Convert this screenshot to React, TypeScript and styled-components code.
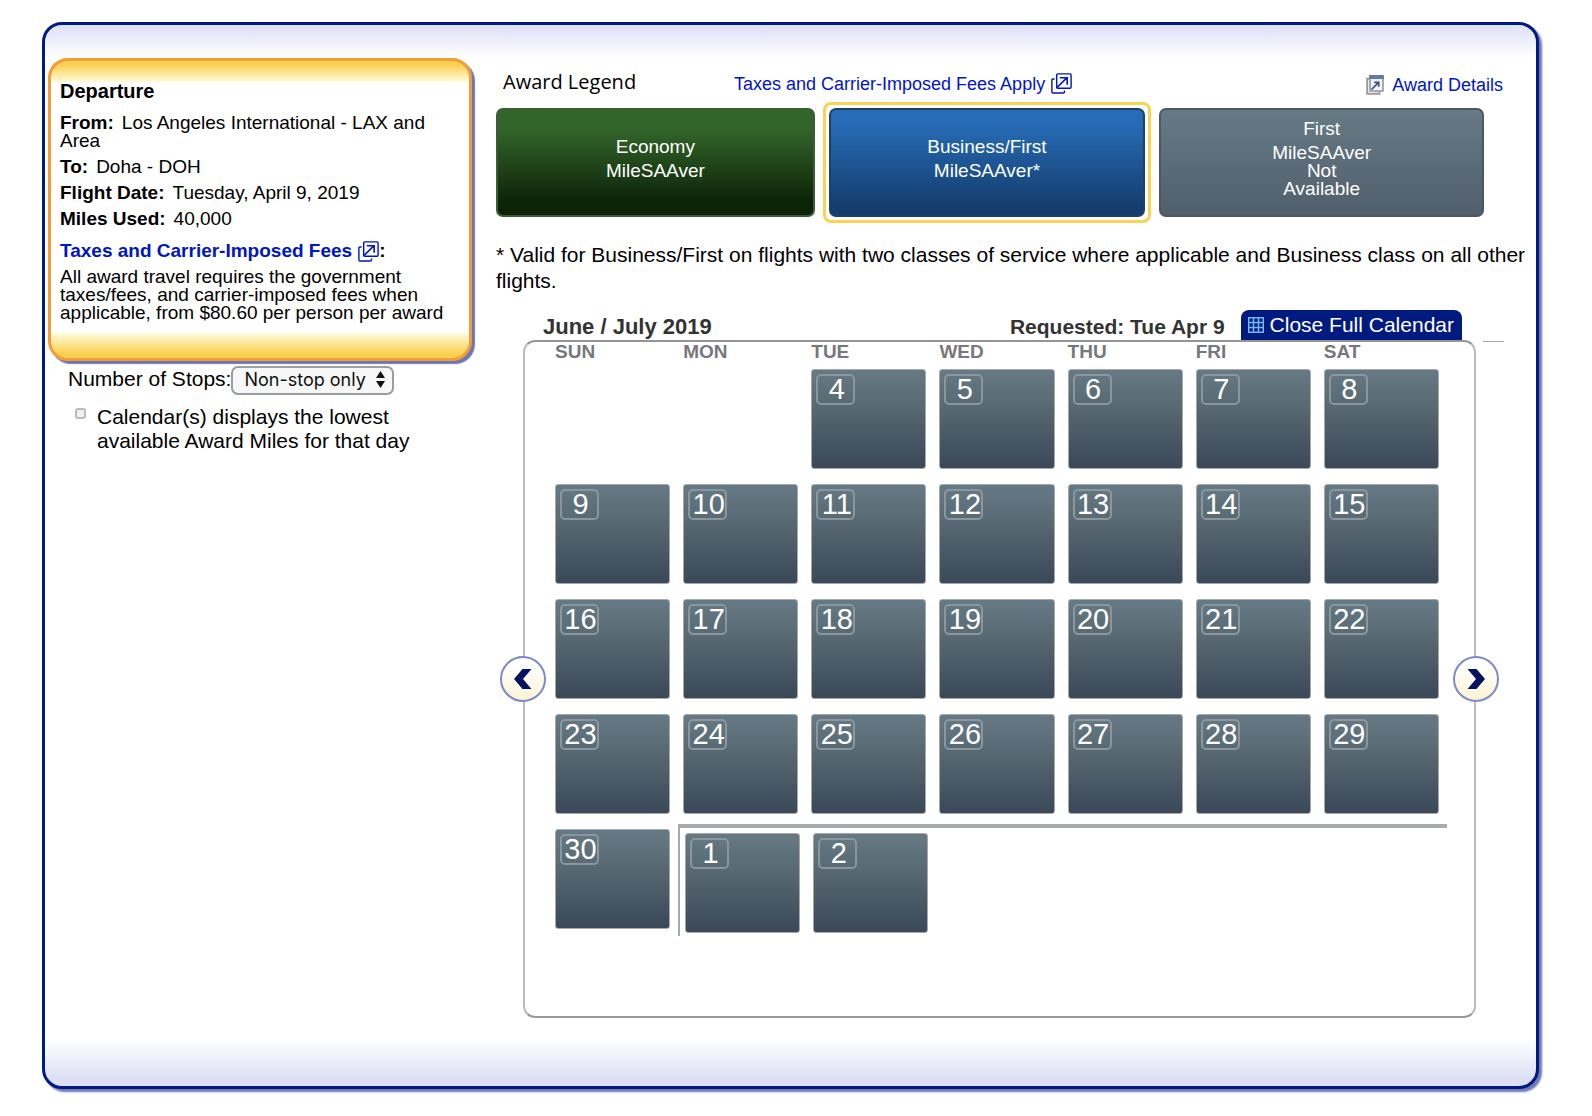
import React from "react";
import styled, { createGlobalStyle, css } from "styled-components";

const GlobalStyle = createGlobalStyle`
  *, *::before, *::after { box-sizing: border-box; }
  body {
    margin: 0;
    background: #fff;
    color: #000;
    font-family: "Liberation Sans", Arial, Helvetica, sans-serif;
    font-size: 19px;
    line-height: 18px;
  }
  h2, p, dl, dd { margin: 0; }
`;

const navy = "#001a80";
const link = "#0015c4";

const Panel = styled.main`
  display: flex;
  gap: 24px;
  margin: 22px 53px 23px 42px;
  padding: 33px 8px 68px 3px;
  border: 3px solid ${navy};
  border-radius: 20px;
  box-shadow: 3px 3px 2px #6f78b8;
  background:
    linear-gradient(#dde0f4, #fff) top / 100% 33px no-repeat,
    linear-gradient(#fff, #dde0f4 85%) bottom / 100% 48px no-repeat,
    #fff;
`;

const Sidebar = styled.aside`
  flex: 0 0 424px;
`;

const TripCard = styled.section`
  padding: 18px 16px 36px 9px;
  border: 3px solid #f29d38;
  border-radius: 20px;
  box-shadow: 3px 3px 1px #6d77b8;
  background:
    linear-gradient(#f9cf4d 15%, #fffbdc) top / 100% 21px no-repeat,
    linear-gradient(#fffbdc, #f9cf4d 85%) bottom / 100% 25px no-repeat,
    #fff;
`;

const CardTitle = styled.h2`
  margin-bottom: 11px;
  font-size: 20px;
  line-height: 24px;
`;

const Facts = styled.dl`
  display: grid;
  gap: 8px;
`;

const Fact = styled.div`
  dt, dd { display: inline; }
  dt { margin-right: 8px; font-weight: bold; }
`;

const FeesTitle = styled.p`
  display: flex;
  align-items: center;
  margin: 14px 0 8px;
  font-weight: bold;
`;

const Link = styled.a`
  display: inline-flex;
  align-items: center;
  gap: 6px;
  color: ${link};
  text-decoration: none;
  svg { margin: -4px 0; }
`;

const Stops = styled.div`
  display: flex;
  align-items: center;
  margin: 5px 0 0 20px;
  font-size: 21px;
  line-height: 24px;
`;

const StopsLabel = styled.label`
  padding-bottom: 4px;
`;

const SelectWrap = styled.div`
  position: relative;
  svg {
    position: absolute;
    top: 5px;
    right: 8px;
    pointer-events: none;
  }
`;

const Select = styled.select`
  appearance: none;
  display: block;
  width: 163px;
  height: 29px;
  padding: 0 0 3px 11px;
  border: 2px solid #9a9da1;
  border-radius: 7px;
  background: #f7f7f7;
  color: #111;
  font: 18px Inter, Roboto, sans-serif;
`;

const LowestOption = styled.label`
  display: flex;
  gap: 11px;
  margin: 10px 40px 0 27px;
  font-size: 21px;
  line-height: 24px;
`;

const Checkbox = styled.input`
  appearance: none;
  flex: none;
  width: 11px;
  height: 11px;
  margin: 3px 0 0;
  border: 2px solid #b9bbc0;
  border-radius: 3px;
  background: #f0f0f3;
  &:checked { background: ${navy}; }
`;

const Main = styled.section`
  flex: 1;
  min-width: 0;
`;

const LegendHead = styled.header`
  display: flex;
  align-items: center;
  height: 44px;
  padding: 7px 25px 0 7px;
  font-size: 18px;
`;

const LegendTitle = styled.h2`
  flex: 0 0 231px;
  padding-bottom: 4px;
  font: 20px "Open Sans", "Noto Sans", sans-serif;
`;

const DetailsLink = styled(Link)`
  margin: 3px 0 0 auto;
  gap: 8px;
`;

const Legend = styled.div`
  display: grid;
  grid-template-columns: 319fr 329fr 325fr;
  align-items: center;
  gap: 8px;
  margin-right: 44px;
`;

const Ring = styled.div`
  padding: 3px;
  border: 3px solid #fad353;
  border-radius: 8px;
`;

const fills = {
  economy: css`border-color: #3c5c36; background: linear-gradient(#32652a 18%, #0d2308 88%);`,
  business: css`border-color: #1d4169; background: linear-gradient(#276cb6 12%, #143d6e 92%);`,
  first: css`border-color: #4b5862; background: linear-gradient(#667a85, #505f6b);`,
};

const Award = styled.button<{ $kind: keyof typeof fills }>`
  display: block;
  width: 100%;
  height: 109px;
  padding: 0 0 8px;
  border: 2px solid;
  border-radius: 7px;
  color: #fff;
  font: 19px/18px "Liberation Sans", Arial, sans-serif;
  ${(p) => fills[p.$kind]}
`;

const Line = styled.span`
  display: block;
  &:first-child { margin-bottom: 6px; }
`;

const Footnote = styled.p`
  margin: 19px 0 16px;
  font-size: 21px;
  line-height: 26px;
`;

const CalendarHead = styled.header`
  display: flex;
  align-items: center;
  height: 30px;
  margin: 0 66px 0 47px;
  color: #333;
  font-size: 21px;
  font-weight: bold;
`;

const Month = styled.h2`
  margin-right: auto;
  padding-top: 4px;
  font-size: 22px;
`;

const Requested = styled.span`
  padding-top: 4px;
`;

const CloseTab = styled.button`
  display: flex;
  align-items: center;
  gap: 6px;
  height: 30px;
  margin-left: 16px;
  padding: 0 8px 0 7px;
  border: 0;
  border-radius: 8px 8px 0 0;
  background: ${navy};
  color: #fff;
  font: 21px "Liberation Sans", Arial, sans-serif;
`;

const Frame = styled.div`
  position: relative;
  margin: 0 52px 0 27px;
  padding: 0 27px 80px 25px;
  border: 2px solid #b9bbbf;
  border-top-color: #949596;
  border-bottom-color: #999;
  border-radius: 12px;
  &::after {
    content: "";
    position: absolute;
    top: -1px;
    right: -30px;
    width: 21px;
    border-top: 1px solid #a5a7ab;
  }
`;

const Pager = styled.button<{ $side: "left" | "right" }>`
  position: absolute;
  top: 50%;
  ${(p) => p.$side}: -25px;
  display: grid;
  place-items: center;
  width: 46px;
  height: 46px;
  margin-top: -23px;
  padding: 0;
  border: 2px solid #8089c6;
  border-radius: 50%;
  background: linear-gradient(#fff 20%, #fbf3d3);
`;

const MonthTable = styled.table`
  width: 100%;
  table-layout: fixed;
  border-spacing: 0;
`;

const DayName = styled.th`
  height: 22px;
  padding: 0 0 2px 5px;
  color: #77787b;
  font-size: 19px;
  line-height: 20px;
  text-align: left;
`;

const DayCell = styled.td<{ $next?: boolean; $first?: boolean; $last?: boolean }>`
  padding: ${(p) => (p.$last ? "5px 8px 7px 5px" : "5px 8px 10px 5px")};
  vertical-align: top;
  ${(p) =>
    p.$next &&
    css`
      padding: 5px 6px 3px 7px;
      border-top: 4px solid #a7aaad;
    `}
  ${(p) =>
    p.$first &&
    css`
      padding-left: 5px;
      border-left: 2px solid #a7aaad;
    `}
`;

const Tile = styled.div`
  height: 100px;
  padding: 4px;
  border: 1px solid #a4a9ad;
  border-radius: 3px;
  background: linear-gradient(#667a85, #54656f 45%, #3a4858);
`;

const DayNumber = styled.span`
  display: block;
  width: 39px;
  height: 31px;
  padding-left: 2px;
  border: 2px solid #8b979f;
  border-radius: 5px;
  color: #fff;
  font-size: 29px;
  line-height: 27px;
  text-align: center;
`;

const PopupIcon = () => (
  <svg width="21" height="21" viewBox="0 0 21 21" fill="none" stroke={link} strokeWidth="1.4" aria-hidden="true">
    <rect x="5.7" y="0.9" width="14.4" height="14.4" rx="1" />
    <path d="M3.6 6H1.9Q.9 6 .9 7V19Q.9 20 1.9 20H12.5Q13.5 20 13.5 19V17.5" />
    <path d="M5.5 15L15.8 4.9M8.8 4.8H16.2V11.8" strokeWidth="1.6" />
  </svg>
);

const DetailsIcon = () => (
  <svg width="18" height="20" viewBox="0 0 18 20" fill="none" aria-hidden="true">
    <path d="M3 3.7H1.2V18.8H13.4V17" stroke="#9a9a9a" strokeWidth="2" />
    <rect x="4" y="1" width="13" height="15" fill="#f1f3f8" stroke="#9197a8" strokeWidth="1.6" />
    <path d="M3.2 0H17.8V4H3.2Z" fill="#6678ab" />
    <path d="M5.5 14.5L12 8M8.2 7.3H12.7V11.8" stroke="#3a4d82" strokeWidth="1.7" />
  </svg>
);

const SelectArrows = () => (
  <svg width="11" height="17" viewBox="0 0 11 17" fill="#111" aria-hidden="true">
    <path d="M5.5 0L10 7H1ZM5.5 17L10 10H1Z" />
  </svg>
);

const GridIcon = () => (
  <svg width="16" height="16" viewBox="0 0 16 16" stroke="#74b9ee" strokeWidth="1.5" fill="none" aria-hidden="true">
    <path d="M.7 .7H15.3V15.3H.7ZM5.5 0V16M10.5 0V16M0 5.5H16M0 10.5H16" />
  </svg>
);

const Chevron = ({ flip }: { flip?: boolean }) => (
  <svg width="18" height="20" viewBox="0 0 18 20" fill="#04145f" aria-hidden="true">
    <path d={flip ? "M17.5 0H8.5L0 10L8.5 20H17.5L9 10Z" : "M.5 0H9.5L18 10L9.5 20H.5L9 10Z"} />
  </svg>
);

const dayNames = ["SUN", "MON", "TUE", "WED", "THU", "FRI", "SAT"];

const weeks: (number | null)[][] = [
  [null, null, 4, 5, 6, 7, 8],
  [9, 10, 11, 12, 13, 14, 15],
  [16, 17, 18, 19, 20, 21, 22],
  [23, 24, 25, 26, 27, 28, 29],
  [30, 1, 2, null, null, null, null],
];

const facts = [
  ["From:", "Los Angeles International - LAX and Area"],
  ["To:", "Doha - DOH"],
  ["Flight Date:", "Tuesday, April 9, 2019"],
  ["Miles Used:", "40,000"],
];

export default function App() {
  return (
    <>
      <GlobalStyle />
      <Panel>
        <Sidebar>
          <TripCard>
            <CardTitle>Departure</CardTitle>
            <Facts>
              {facts.map(([name, value]) => (
                <Fact key={name}>
                  <dt>{name}</dt>
                  <dd>{value}</dd>
                </Fact>
              ))}
            </Facts>
            <FeesTitle>
              <Link href="#fees">
                Taxes and Carrier-Imposed Fees <PopupIcon />
              </Link>
              :
            </FeesTitle>
            <p>
              All award travel requires the government taxes/fees, and carrier-imposed fees when
              applicable, from $80.60 per person per award
            </p>
          </TripCard>
          <Stops>
            <StopsLabel htmlFor="stops">Number of Stops:</StopsLabel>
            <SelectWrap>
              <Select id="stops" defaultValue="nonstop">
                <option value="nonstop">Non-stop only</option>
              </Select>
              <SelectArrows />
            </SelectWrap>
          </Stops>
          <LowestOption>
            <Checkbox type="checkbox" />
            <span>Calendar(s) displays the lowest available Award Miles for that day</span>
          </LowestOption>
        </Sidebar>

        <Main>
          <LegendHead>
            <LegendTitle>Award Legend</LegendTitle>
            <Link href="#fees">
              Taxes and Carrier-Imposed Fees Apply <PopupIcon />
            </Link>
            <DetailsLink href="#details">
              <DetailsIcon /> Award Details
            </DetailsLink>
          </LegendHead>
          <Legend>
            <Award $kind="economy" type="button">
              <Line>Economy</Line>
              <Line>MileSAAver</Line>
            </Award>
            <Ring>
              <Award $kind="business" type="button" aria-pressed="true">
                <Line>Business/First</Line>
                <Line>MileSAAver*</Line>
              </Award>
            </Ring>
            <Award $kind="first" type="button">
              <Line>First</Line>
              <Line>MileSAAver</Line>
              <Line>Not</Line>
              <Line>Available</Line>
            </Award>
          </Legend>
          <Footnote>
            * Valid for Business/First on flights with two classes of service where applicable and
            Business class on all other flights.
          </Footnote>

          <CalendarHead>
            <Month>June / July 2019</Month>
            <Requested>Requested: Tue Apr 9</Requested>
            <CloseTab type="button">
              <GridIcon />
              Close Full Calendar
            </CloseTab>
          </CalendarHead>
          <Frame>
            <MonthTable>
              <thead>
                <tr>
                  {dayNames.map((name) => (
                    <DayName key={name} scope="col">
                      {name}
                    </DayName>
                  ))}
                </tr>
              </thead>
              <tbody>
                {weeks.map((week, row) => (
                  <tr key={row}>
                    {week.map((day, col) => {
                      const last = row === weeks.length - 1;
                      return (
                        <DayCell key={col} $last={last} $next={last && col > 0} $first={last && col === 1}>
                          {day !== null && (
                            <Tile>
                              <DayNumber>{day}</DayNumber>
                            </Tile>
                          )}
                        </DayCell>
                      );
                    })}
                  </tr>
                ))}
              </tbody>
            </MonthTable>
            <Pager $side="left" type="button" aria-label="Previous month">
              <Chevron flip />
            </Pager>
            <Pager $side="right" type="button" aria-label="Next month">
              <Chevron />
            </Pager>
          </Frame>
        </Main>
      </Panel>
    </>
  );
}
